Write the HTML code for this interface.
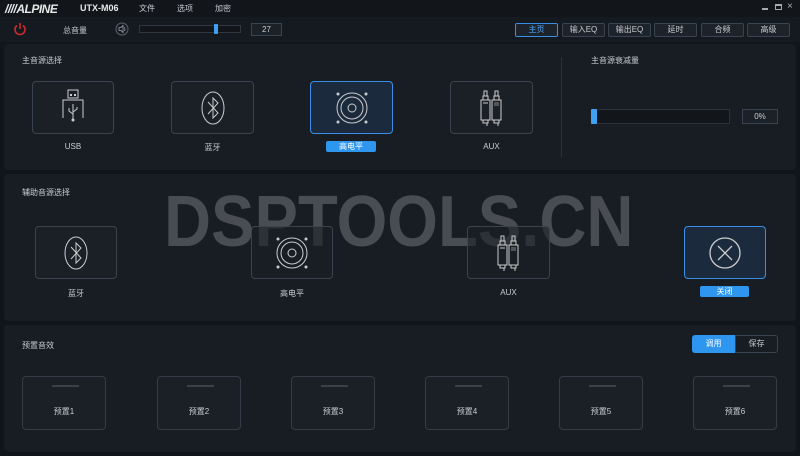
<!DOCTYPE html><html><head><meta charset="utf-8"><style>
*{margin:0;padding:0;box-sizing:border-box}
body{width:800px;height:456px;background:#111419;font-family:"Liberation Sans","Noto Sans CJK SC",sans-serif;color:#c8ccd2;font-size:8px;position:relative;overflow:hidden}
.a{position:absolute}
.panel{position:absolute;background:#181c23;border-radius:4px}
.box{position:absolute;border:1px solid #3a4450;border-radius:4px;background:#1b2027;display:flex;align-items:center;justify-content:center}
.sel{border:1px solid #3a8ee6;background:#1b2b3d}
.lbl{position:absolute;text-align:center;font-size:8px;color:#c8ccd2}
.pill{position:absolute;background:#2f96f0;color:#fff;border-radius:2px;text-align:center;font-size:8px;line-height:11px}
.nav{position:absolute;top:23px;height:14px;border:1px solid #3a4450;background:#1d232b;border-radius:2px;text-align:center;line-height:12px;font-size:8px;color:#c8ccd2;width:43px}
.pre{position:absolute;top:376px;width:84px;height:54px;border:1px solid #333c47;border-radius:4px;background:#1b2027}
.pre i{position:absolute;left:29px;top:8px;width:27px;height:2px;background:#3a414a}
.pre span{position:absolute;left:0;right:0;top:29px;text-align:center;font-size:8px}
</style></head><body>
<div class="a" style="left:0;top:0;width:800px;height:17px;background:#12161b"></div>
<div class="a" style="left:5px;top:2px;font:italic 900 12px 'Liberation Sans';color:#e8e8e8;letter-spacing:-0.5px">////ALPINE</div>
<div class="a" style="left:80px;top:3px;font:bold 9px 'Liberation Sans';color:#e8e8e8">UTX-M06</div>
<div class="a" style="left:139px;top:3px">文件</div>
<div class="a" style="left:177px;top:3px">选项</div>
<div class="a" style="left:215px;top:3px">加密</div>
<div class="a" style="left:762px;top:8px;width:6px;height:2px;background:#aaa"></div>
<div class="a" style="left:775px;top:4px;width:7px;height:6px;border:1px solid #aaa;border-top-width:2px"></div>
<div class="a" style="left:787px;top:1px;font-size:10px;color:#aaa">×</div>
<div class="a" style="left:0;top:17px;width:800px;height:25px;background:#151a20"></div>
<svg class="a" style="left:12px;top:21px" width="16" height="16" viewBox="0 0 16 16"><path d="M5 4.5A5 5 0 1 0 11 4.5" fill="none" stroke="#d12a2a" stroke-width="1.6"/><path d="M8 2v6" stroke="#d12a2a" stroke-width="1.6"/></svg>
<div class="a" style="left:63px;top:25px">总音量</div>
<svg class="a" style="left:115px;top:22px" width="14" height="14" viewBox="0 0 14 14"><circle cx="7" cy="7" r="6" fill="none" stroke="#5a6470"/><path d="M4 5.5h2l2-2v7l-2-2H4z" fill="none" stroke="#9aa2ac" stroke-width=".8"/><path d="M9.5 5q1 2 0 4" fill="none" stroke="#9aa2ac" stroke-width=".7"/></svg>
<div class="a" style="left:139px;top:25px;width:102px;height:8px;background:#12161b;border:1px solid #2f3740"></div>
<div class="a" style="left:214px;top:24px;width:4px;height:10px;background:#3fa0f5;border-radius:1px"></div>
<div class="a" style="left:251px;top:23px;width:31px;height:13px;border:1px solid #3a4450;background:#1b2128;text-align:center;line-height:11px">27</div>
<div class="nav" style="left:515px;border-color:#3a8ee6;color:#4aa3f5">主页</div>
<div class="nav" style="left:562px">输入EQ</div>
<div class="nav" style="left:608px">输出EQ</div>
<div class="nav" style="left:654px">延时</div>
<div class="nav" style="left:701px">合频</div>
<div class="nav" style="left:747px">高级</div>

<div class="panel" style="left:4px;top:44px;width:792px;height:126px"></div>
<div class="a" style="left:22px;top:55px">主音源选择</div>
<div class="box" style="left:32px;top:81px;width:82px;height:53px"><svg width="24" height="40" viewBox="0 0 24 40"><rect x="7" y="2" width="10" height="8" fill="none" stroke="#ccc"/><rect x="9" y="6" width="2" height="2" fill="#ccc"/><rect x="13" y="6" width="2" height="2" fill="#ccc"/><path d="M2 30V12h20v18" fill="none" stroke="#ccc"/><path d="M12 16v16M12 26l-4-3v-3M12 24l4-3v-2" fill="none" stroke="#ccc"/><circle cx="12" cy="32" r="1.5" fill="#ccc"/></svg></div>
<div class="lbl" style="left:32px;width:82px;top:142px">USB</div>
<div class="box" style="left:171px;top:81px;width:83px;height:53px"><svg width="26" height="36" viewBox="0 0 26 36"><ellipse cx="13" cy="18" rx="11" ry="16" fill="none" stroke="#ccc"/><path d="M8 12l10 11-5 5V8l5 5-10 11" fill="none" stroke="#ccc"/></svg></div>
<div class="lbl" style="left:171px;width:83px;top:142px">蓝牙</div>
<div class="box sel" style="left:310px;top:81px;width:83px;height:53px"><svg width="36" height="36" viewBox="0 0 36 36"><circle cx="18" cy="18" r="15" fill="none" stroke="#ccc"/><circle cx="18" cy="18" r="11" fill="none" stroke="#ccc"/><circle cx="18" cy="18" r="4" fill="none" stroke="#ccc"/><circle cx="4" cy="4" r="1.5" fill="#ccc"/><circle cx="32" cy="4" r="1.5" fill="#ccc"/><circle cx="4" cy="32" r="1.5" fill="#ccc"/><circle cx="32" cy="32" r="1.5" fill="#ccc"/></svg></div>
<div class="pill" style="left:326px;top:141px;width:50px">高电平</div>
<div class="box" style="left:450px;top:81px;width:83px;height:53px"><svg width="26" height="38" viewBox="0 0 26 38"><g fill="none" stroke="#ccc"><path d="M5 2h3v5H5zM4 7h5v4H4zM2 11h9v20H2zM4 31h5v3H4zM5 34h3v3"/><path d="M16 2h3v5h-3zM15 7h5v4h-5zM13 11h9v20h-9zM15 31h5v3h-5zM16 34h3v3"/><path d="M4 14h5"/><path d="M15 14h5M15 16h5" stroke="#888"/></g></svg></div>
<div class="lbl" style="left:450px;width:83px;top:142px">AUX</div>
<div class="a" style="left:561px;top:57px;width:1px;height:100px;background:#2a313a"></div>
<div class="a" style="left:591px;top:55px">主音源衰减量</div>
<div class="a" style="left:591px;top:109px;width:139px;height:15px;background:#12161b;border:1px solid #2a313a"></div>
<div class="a" style="left:591px;top:109px;width:6px;height:15px;background:#3fa0f5;border-radius:1px"></div>
<div class="a" style="left:742px;top:109px;width:36px;height:15px;border:1px solid #3a4450;background:#1b2128;text-align:center;line-height:13px">0%</div>

<div class="panel" style="left:4px;top:174px;width:792px;height:147px"></div>
<div class="a" style="left:22px;top:187px">辅助音源选择</div>
<div class="a" style="left:164px;top:181px;font:bold 72px 'Liberation Sans';color:#494d53;letter-spacing:0;transform:scaleX(0.905);transform-origin:0 0;white-space:nowrap">DSPTOOLS.CN</div>
<div class="box" style="left:35px;top:226px;width:82px;height:53px"><svg width="26" height="36" viewBox="0 0 26 36"><ellipse cx="13" cy="18" rx="11" ry="16" fill="none" stroke="#ccc"/><path d="M8 12l10 11-5 5V8l5 5-10 11" fill="none" stroke="#ccc"/></svg></div>
<div class="lbl" style="left:35px;width:82px;top:288px">蓝牙</div>
<div class="box" style="left:251px;top:226px;width:82px;height:53px;background:rgba(27,32,39,.6)"><svg width="36" height="36" viewBox="0 0 36 36"><circle cx="18" cy="18" r="15" fill="none" stroke="#ccc"/><circle cx="18" cy="18" r="11" fill="none" stroke="#ccc"/><circle cx="18" cy="18" r="4" fill="none" stroke="#ccc"/><circle cx="4" cy="4" r="1.5" fill="#ccc"/><circle cx="32" cy="4" r="1.5" fill="#ccc"/><circle cx="4" cy="32" r="1.5" fill="#ccc"/><circle cx="32" cy="32" r="1.5" fill="#ccc"/></svg></div>
<div class="lbl" style="left:251px;width:82px;top:288px">高电平</div>
<div class="box" style="left:467px;top:226px;width:83px;height:53px;background:rgba(27,32,39,.6)"><svg width="26" height="38" viewBox="0 0 26 38"><g fill="none" stroke="#ccc"><path d="M5 2h3v5H5zM4 7h5v4H4zM2 11h9v20H2zM4 31h5v3H4zM5 34h3v3"/><path d="M16 2h3v5h-3zM15 7h5v4h-5zM13 11h9v20h-9zM15 31h5v3h-5zM16 34h3v3"/><path d="M4 14h5"/><path d="M15 14h5M15 16h5" stroke="#888"/></g></svg></div>
<div class="lbl" style="left:467px;width:83px;top:288px">AUX</div>
<div class="box sel" style="left:684px;top:226px;width:82px;height:53px"><svg width="34" height="34" viewBox="0 0 34 34"><circle cx="17" cy="17" r="15" fill="none" stroke="#ccc" stroke-width="1.3"/><path d="M10 10l14 14M24 10L10 24" stroke="#ccc" stroke-width="1.3"/></svg></div>
<div class="pill" style="left:700px;top:286px;width:49px">关闭</div>

<div class="panel" style="left:4px;top:325px;width:792px;height:127px"></div>
<div class="a" style="left:22px;top:340px">预置音效</div>
<div class="a" style="left:692px;top:335px;width:43px;height:18px;background:#2f96f0;color:#fff;border-radius:3px 0 0 3px;text-align:center;line-height:18px">调用</div>
<div class="a" style="left:735px;top:335px;width:43px;height:18px;border:1px solid #3a4450;border-radius:0 3px 3px 0;text-align:center;line-height:16px">保存</div>
<div class="pre" style="left:22px"><i></i><span>预置1</span></div>
<div class="pre" style="left:157px"><i></i><span>预置2</span></div>
<div class="pre" style="left:291px"><i></i><span>预置3</span></div>
<div class="pre" style="left:425px"><i></i><span>预置4</span></div>
<div class="pre" style="left:559px"><i></i><span>预置5</span></div>
<div class="pre" style="left:693px"><i></i><span>预置6</span></div>
</body></html>
